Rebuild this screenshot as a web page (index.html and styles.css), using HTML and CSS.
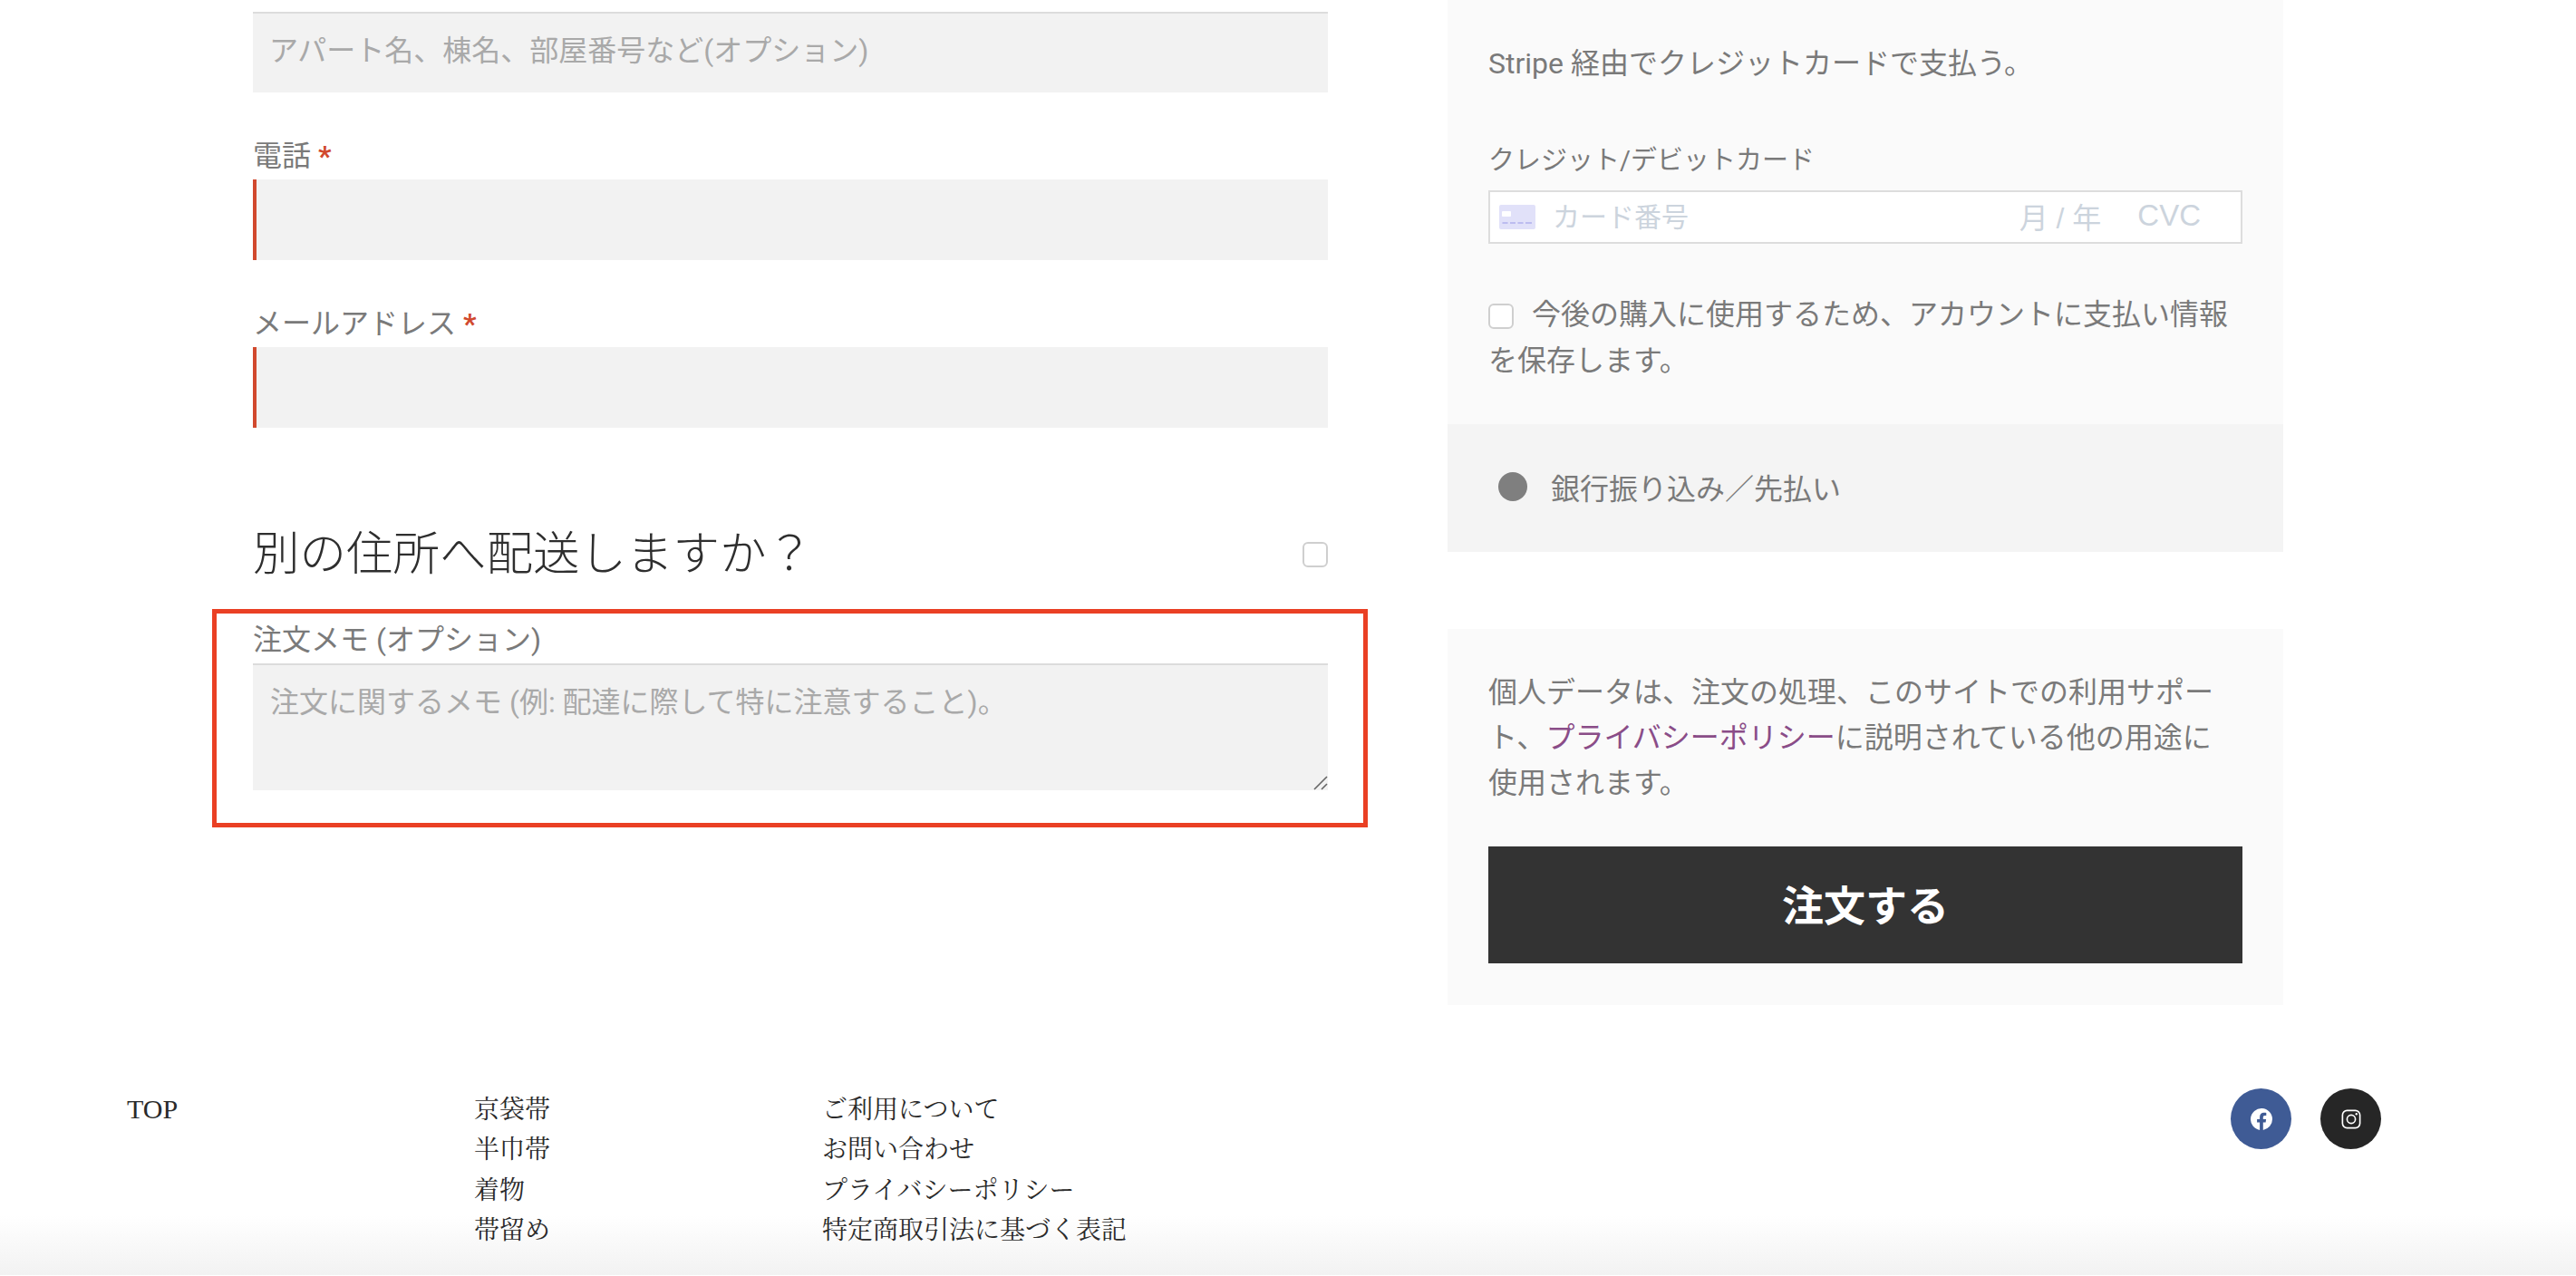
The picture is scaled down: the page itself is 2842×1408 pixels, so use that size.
FILE: index.html
```html
<!DOCTYPE html>
<html lang="ja">
<head>
<meta charset="utf-8">
<title>チェックアウト</title>
<link rel="stylesheet" href="styles.css">
</head>
<body>
<main class="checkout">
  <section class="billing">
    <div class="field">
      <input class="text-input" type="text" placeholder="アパート名、棟名、部屋番号など(オプション)">
    </div>
    <div class="field">
      <label class="field-label">電話 <span class="required">*</span></label>
      <input class="text-input is-required" type="text">
    </div>
    <div class="field">
      <label class="field-label">メールアドレス <span class="required">*</span></label>
      <input class="text-input is-required" type="text">
    </div>
    <div class="ship-row">
      <h3 class="ship-title">別の住所へ配送しますか？</h3>
      <input class="check" type="checkbox">
    </div>
    <div class="note-highlight">
      <label class="field-label note-label">注文メモ (オプション)</label>
      <div class="note-wrap">
        <textarea class="note-input" placeholder="注文に関するメモ (例: 配達に際して特に注意すること)。"></textarea>
        <svg class="note-grip" viewBox="0 0 16 16" width="16" height="16" aria-hidden="true"><path d="M1 15L15 1M9 15l6-6" stroke="#666" stroke-width="1.600" fill="none"/></svg>
      </div>
    </div>
  </section>
  <aside class="order">
    <div class="pay-box">
      <p class="pay-text">Stripe 経由でクレジットカードで支払う。</p>
      <div class="card-label">クレジット/デビットカード</div>
      <div class="card-field">
        <svg class="card-icon" viewBox="0 0 40 27" width="40" height="27" aria-hidden="true">
          <rect width="40" height="27" rx="2" fill="#e1e1f9"/>
          <rect x="3" y="7" width="10" height="6" rx="1" fill="#fff"/>
          <path d="M3.500 20h6M12 20h6M20.500 20h6M29 20h7" stroke="#bcbcf0" stroke-width="2"/>
        </svg>
        <span class="card-number">カード番号</span>
        <span class="card-date">月 / 年</span>
        <span class="card-cvc">CVC</span>
      </div>
      <label class="save-text"><input class="check check-inline" type="checkbox">今後の購入に使用するため、アカウントに支払い情報を保存します。</label>
    </div>
    <div class="bank-row">
      <span class="radio"></span>
      <span>銀行振り込み／先払い</span>
    </div>
    <div class="place-box">
      <p class="privacy">個人データは、注文の処理、このサイトでの利用サポート、<a class="privacy-link" href="#">プライバシーポリシー</a>に説明されている他の用途に使用されます。</p>
      <button class="place-btn" type="button">注文する</button>
    </div>
  </aside>
</main>
<footer class="footer">
  <ul class="foot-col foot-col-first"><li class="foot-top">TOP</li></ul>
  <ul class="foot-col"><li>京袋帯</li><li>半巾帯</li><li>着物</li><li>帯留め</li></ul>
  <ul class="foot-col"><li>ご利用について</li><li>お問い合わせ</li><li>プライバシーポリシー</li><li>特定商取引法に基づく表記</li></ul>
  <div class="social">
    <a class="social-btn fb" href="#" aria-label="Facebook">
      <svg viewBox="0 0 24 24" width="24" height="24"><path fill="#fff" d="M24 12a12 12 0 1 0-13.900 11.900v-8.400H7.100V12h3V9.400c0-3 1.800-4.700 4.500-4.700 1.300 0 2.700.2 2.700.2v3h-1.500c-1.500 0-2 .9-2 1.900V12h3.300l-.5 3.500h-2.800v8.400A12 12 0 0 0 24 12z"/></svg>
    </a>
    <a class="social-btn ig" href="#" aria-label="Instagram">
      <svg viewBox="0 0 24 24" width="22" height="22" fill="none" stroke="#fff" stroke-width="1.800"><rect x="1.500" y="1.500" width="21" height="21" rx="5.500"/><circle cx="12" cy="12" r="5"/><circle cx="18.300" cy="5.700" r="1.300" fill="#fff" stroke="none"/></svg>
    </a>
  </div>
</footer>
</body>
</html>
```
FILE: styles.css
```css
* { box-sizing: border-box; }
html, body { margin: 0; padding: 0; height: 1408px; overflow: hidden; background: #fff; }
body {
  font-family: Roboto, "Noto Sans CJK JP", sans-serif;
  font-size: 32px;
  font-weight: 400;
  color: #7a7a7a;
}
.checkout { display: flex; align-items: flex-start; padding-left: 279px; }
.billing { width: 1186px; padding-top: 13px; }
.field { margin-bottom: 43px; }
.field-label { display: block; height: 53px; padding-top: 2px; line-height: 51px; font-size: 32px; color: #7a7a7a; }
.required { color: #d1492e; font-weight: 700; }
.text-input {
  display: block; width: 100%; height: 89px; padding: 0 18px 3px;
  border: 0; background: #f2f2f2; box-shadow: inset 0 2px 0 #dcdcdc;
  font: 400 32px Roboto, "Noto Sans CJK JP", sans-serif; color: #777; outline: 0;
}
.text-input.is-required { border-left: 4px solid #d1492e; box-shadow: none; }
.text-input::placeholder, .note-input::placeholder { color: #a9a9a9; opacity: 1; }
.ship-row { display: flex; align-items: center; justify-content: space-between; height: 60px; margin-top: 110px; margin-bottom: 30px; }
.ship-title { margin: 0; font-size: 51.500px; font-weight: 300; line-height: 60px; color: #2e2e2e; }
.check {
  appearance: none; -webkit-appearance: none; width: 28px; height: 28px; margin: 0;
  background: #fff; border: 2px solid #cfcfcf; border-radius: 6px;
}
.note-highlight { margin: 0 -44px 0 -45px; padding: 3px 39px 36px 40px; border: 5px solid #ea4024; }
.note-label { height: 52px; padding-top: 1px; }
.note-wrap { position: relative; }
.note-input {
  display: block; width: 100%; height: 140px; padding: 17px 19px; margin: 0;
  border: 0; background: #f2f2f2; box-shadow: inset 0 2px 0 #dcdcdc;
  font: 400 32px Roboto, "Noto Sans CJK JP", sans-serif; color: #777; outline: 0; resize: none;
}
.note-grip { position: absolute; right: 0; bottom: 0; }
.order { width: 922px; margin-left: 132px; }
.pay-box { background: #fafafa; padding: 45px 45px 44px; }
.pay-text { margin: 0 0 61px; line-height: 51px; }
.card-label { font-size: 29px; line-height: 40px; margin-bottom: 13px; }
.card-field {
  display: flex; align-items: center; height: 59px; padding: 0 44px 4px 10px; margin-bottom: 53px;
  background: #fff; border: 2px solid #ddd; color: #ccd4dd; font-size: 30px;
}
.card-icon { flex: none; margin: 4px 19px 0 0; }
.card-number { flex: 1; padding-bottom: 2px; }
.card-date { margin-right: 40px; font-family: "Liberation Sans", "Noto Sans CJK JP", sans-serif; font-size: 32px; }
.card-cvc { font-family: "Liberation Sans", sans-serif; font-size: 33px; }
.save-text { display: block; line-height: 51px; }
.check-inline { display: inline-block; vertical-align: -5px; margin-right: 20px; }
.bank-row { display: flex; align-items: center; gap: 26px; height: 141px; padding: 0 0 3px 56px; background: #f4f4f4; font-size: 32px; }
.radio { width: 32px; height: 32px; border-radius: 50%; background: #7f7f7f; }
.place-box { margin-top: 85px; padding: 45px 45px 46px; background: #fafafa; }
.privacy { max-width: 810px; margin: 0 0 45px; line-height: 50px; }
.privacy-link { color: #8a4d88; text-decoration: none; }
.place-btn {
  display: block; width: 100%; height: 129px; padding: 0 0 5px; border: 0; background: #333; color: #fff;
  font: 700 46px Roboto, "Noto Sans CJK JP", sans-serif;
}
.footer {
  display: flex; align-items: flex-start; height: 206px; margin-top: 92px; padding: 2px 215px 0 140px;
  background: linear-gradient(to bottom, #fff 68%, #f2f2f2 100%);
  font-family: "Liberation Serif", "Noto Serif CJK JP", "Noto Sans CJK JP", serif;
  font-size: 28px; color: #2a2a2a;
}
.foot-col { width: 384px; margin: 0; padding: 0; list-style: none; line-height: 44.300px; }
.foot-col-first { width: 383px; }
.foot-top { font-size: 30px; line-height: 42px; }
.social { display: flex; gap: 32px; margin: -2px 0 0 auto; }
.social-btn { display: flex; align-items: center; justify-content: center; width: 67px; height: 67px; border-radius: 50%; }
.fb { background: #3f5b95; }
.ig { background: #262626; }
```
